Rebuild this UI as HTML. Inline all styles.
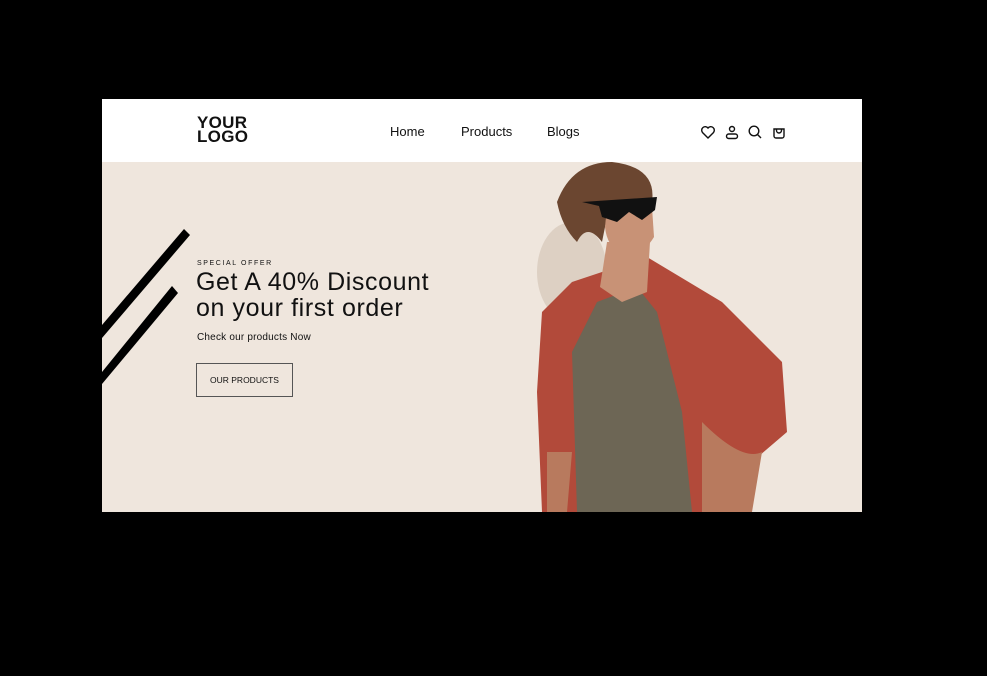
<!DOCTYPE html>
<html><head><style>
html,body{margin:0;padding:0;background:#000;width:987px;height:676px;overflow:hidden;font-family:"Liberation Sans",sans-serif}
.page{position:absolute;left:102px;top:99px;width:760px;height:413px;background:#fff;overflow:hidden}
.hdr{position:absolute;left:0;top:0;width:760px;height:63px;background:#fff}
.logo{position:absolute;left:95px;top:17px;font-weight:900;font-size:17px;line-height:14px;letter-spacing:0.3px;color:#111}
.nav{position:absolute;top:25px;font-size:13px;color:#111}
.hero{position:absolute;left:0;top:63px;width:760px;height:350px;background:#efe6dd}
.t{position:absolute;color:#111}
</style></head><body>
<div class="page">
 <div class="hdr">
  <div class="logo">YOUR<br>LOGO</div>
  <div class="nav" style="left:288px">Home</div>
  <div class="nav" style="left:359px">Products</div>
  <div class="nav" style="left:445px">Blogs</div>
  <svg style="position:absolute;left:598px;top:25px" width="92" height="16" viewBox="0 0 92 16" fill="none" stroke="#111" stroke-width="1.4">
   <path d="M8 14 L2.5 8.5 A3.3 3.3 0 0 1 8 4 A3.3 3.3 0 0 1 13.5 8.5 Z"/>
   <circle cx="32" cy="5" r="2.5"/><rect x="26.5" y="10" width="11" height="4.5" rx="2.2"/>
   <circle cx="54" cy="7" r="4.8"/><path d="M57.5 10.5 L61 14"/>
   <path d="M74 5 h10 v7 a2 2 0 0 1 -2 2 h-6 a2 2 0 0 1 -2 -2 Z M76.5 5 v1.5 a2.5 2.5 0 0 0 5 0 V5"/>
  </svg>
 </div>
 <div class="hero">
  <svg style="position:absolute;left:0;top:0" width="760" height="350">
   <path d="M0 163 L82 67 L88 73 L0 176 Z" fill="#000"/>
   <path d="M0 210 L70 124 L76 131 L0 222 Z" fill="#000"/>
   <ellipse cx="470" cy="110" rx="35" ry="50" fill="#ddd0c3"/>
   <path d="M440 350 L435 230 L440 150 L470 120 L500 110 L545 95 L570 110 L620 140 L680 200 L685 270 L650 300 L640 350 Z" fill="#b24a3a"/>
   <path d="M475 350 L470 190 L495 140 L535 125 L555 150 L580 250 L590 350 Z" fill="#6d6655"/>
   <path d="M498 125 L505 80 L548 80 L545 130 L520 140 Z" fill="#c89276"/>
   <path d="M455 40 Q470 0 510 0 Q555 5 550 40 L548 65 Q540 75 530 60 L505 55 L500 80 Q485 60 475 80 Q460 65 455 40 Z" fill="#6b4630"/>
   <path d="M505 45 Q525 35 550 45 L552 75 Q540 95 520 92 Q505 85 503 65 Z" fill="#c89276"/>
   <path d="M480 40 L555 35 L553 48 L540 58 L527 50 L515 60 L500 55 L497 44 Z" fill="#111"/>
   <path d="M600 260 Q640 300 660 290 L650 350 L600 350 Z" fill="#b87a5e"/>
   <path d="M445 290 L470 290 L465 350 L445 350 Z" fill="#b87a5e"/>
  </svg>
  <div class="t" style="left:95px;top:98px;font-size:7px;letter-spacing:1.6px">SPECIAL OFFER</div>
  <div class="t" style="left:94px;top:107px;font-size:25px;line-height:26px;letter-spacing:0.6px">Get A 40% Discount<br>on your first order</div>
  <div class="t" style="left:95px;top:170px;font-size:10px;letter-spacing:0.2px">Check our products Now</div>
  <div class="t" style="left:94px;top:201px;width:95px;height:32px;border:1px solid #555;font-size:8.5px;line-height:32px;text-align:center">OUR PRODUCTS</div>
 </div>
</div>
</body></html>
